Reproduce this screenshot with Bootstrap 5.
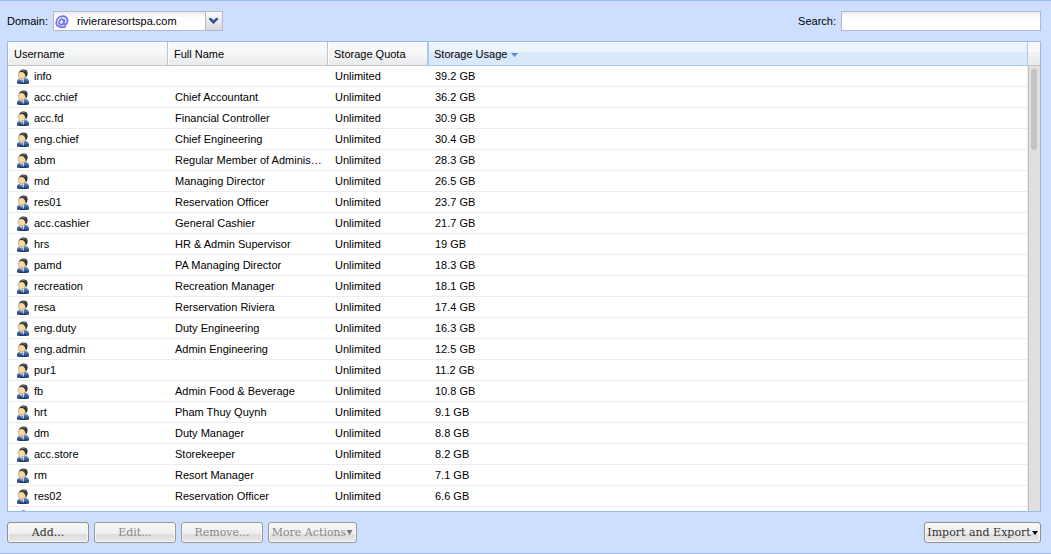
<!DOCTYPE html>
<html lang="en">
<head>
<meta charset="utf-8">
<meta name="viewport" content="width=device-width, initial-scale=1">
<title>Mailbox accounts</title>
<link href="https://cdn.jsdelivr.net/npm/bootstrap@5.3.0/dist/css/bootstrap.min.css" rel="stylesheet">
<style>
body{font:11px/20px "Liberation Sans",Arial,sans-serif;color:#000;background:#cddeff}
.shell{border-top:1px solid #99bbe8;border-bottom:1px solid #99bbe8;padding:10px 10px 10px 7px;gap:10px}
.pair{gap:5px}
.field{height:20px;border:1px solid #b5b8c8;border-radius:0;font-size:11px;line-height:16px;color:#000;background:linear-gradient(#e9ecee,#fff 6px)}
.field:focus{outline:1px solid #7eadd9}
.domain-pick{width:170px}
.domain-pick .field{appearance:none;padding:0 20px 0 23px}
.at-mark{left:2px;top:4px;pointer-events:none}
.trigger{right:0;top:0;width:18px;height:20px;border:1px solid #b5b8c8;background:linear-gradient(#fafafa,#d8dade);pointer-events:none}
.search-box{width:200px}
.panel{border:1px solid #99bbe8;background:#fff;min-height:0}
.accounts{table-layout:fixed;border-collapse:separate;border-spacing:0}
.accounts th{height:24px;padding:1px 6px 0;font-weight:400;line-height:21px;white-space:nowrap;border-right:1px solid #c5c5c5;border-bottom:1px solid #c5c5c5;background:linear-gradient(#f9f9f9,#f5f6f7 50%,#e9eaec);box-shadow:inset 1px 1px #fff}
.accounts th:nth-child(3){border-right-color:#a6c8f2}
.accounts th.sorted{border-color:#a6c8f2;background:linear-gradient(#fff 1px,#ebf3fd 1px,#ebf3fd 10px,#d9e8fb 10px);box-shadow:inset 1px 0 #a6c8f2}
.accounts td{height:21px;padding:0 5px 0 7px;line-height:20px;border-bottom:1px solid #ededed;white-space:nowrap;overflow:hidden}
.accounts td:first-child{padding-left:8px}
.accounts td:last-child{border-right:1px solid #ededed}
.person{width:14px;height:16px;margin-right:4px;vertical-align:-5px}
.sort-mark{margin-left:1px}
.c-name{width:160px}.c-quota{width:100px}
.side{width:12px}
.corner{height:24px;border-bottom:1px solid #c5c5c5;background:linear-gradient(#f9f9f9 10px,#f2f2f3 10px,#e9eaec)}
.track{border-left:1px solid #bdbdba;background:#e0e0de;padding:3px 3px 0 2px}
.thumb{height:81px;border-radius:3px;background:#c2c3c2}
.tools{gap:5px}
.tool{width:82px;height:21px;padding:1px 0 0;border:1px solid #8f8f8f;border-radius:3px;background:linear-gradient(#f8f8f8,#eee 11px,#dcdcdc 11px,#e9e9e9);box-shadow:inset 0 0 0 1px #f8f8f8;font:11px/18px "DejaVu Serif",serif;color:#333;white-space:nowrap}
.tool:disabled{color:#888;border-color:#999}
.tool-more{width:89px}.tool-export{width:117px}
.tool svg{vertical-align:1px}
</style>
</head>
<body>
<svg class="position-absolute" width="0" height="0" aria-hidden="true">
  <defs>
    <linearGradient id="suit" x2="0" y2="1"><stop stop-color="#7d9fd2"/><stop offset=".5" stop-color="#3f67ac"/><stop offset="1" stop-color="#162f6b"/></linearGradient>
    <symbol id="person" viewBox="0 0 14 16">
      <path d="M1 14.500C.5 11.500 2 9.500 5 9L9 8.500C12 9 13.500 11 13 14.500Q7 15.500 1 14.500Z" fill="url(#suit)"/>
      <path d="M3 9.500L8 9 7.500 14Z" fill="#fff"/>
      <path d="M5 10.500L6.500 10.500 7.500 14Z" fill="#444"/>
      <ellipse cx="6" cy="6" rx="3.800" ry="4" fill="#f6daa2" stroke="#a88654" stroke-width=".5"/>
      <path d="M3 3.500C4 1 6 .5 8 .5C11.500 .5 12.500 4 11 7L10 8.500 9 5.500 7.500 3.500 5.500 3Z" fill="#343638"/>
      <path d="M5.500 1.800C7 1.200 8.500 1.500 9.500 2.700" fill="none" stroke="#858a8c" stroke-width=".8"/>
    </symbol>
  </defs>
</svg>
<main class="shell vh-100 d-flex flex-column overflow-hidden">
  <header class="d-flex justify-content-between">
    <div class="pair d-flex">
      <label for="domain">Domain:</label>
      <div class="domain-pick position-relative">
        <select id="domain" class="field w-100 d-block"><option>rivieraresortspa.com</option></select>
        <svg class="at-mark position-absolute" width="14" height="14" viewBox="0 0 14 14" fill="none" stroke="#7578ea" stroke-width="1.900"><path d="M11 11.300C6 13.500 1.200 11.500 1.300 7.500C1.500 3 5 1.200 8 1.300C11.500 1.500 13 4 12.500 6.500C12 9 10 10 9 9.500C8.300 9 9 7.500 9.700 4.200"/><ellipse cx="6.500" cy="7" rx="2.200" ry="2.700" transform="rotate(20 6.500 7)"/></svg>
        <span class="trigger position-absolute d-flex align-items-center justify-content-center"><svg width="9" height="6" viewBox="0 0 9 6"><path d="M0 0H2L4.500 2.200 7 0H9V1.500L4.500 6 0 1.500Z" fill="#2b5390"/></svg></span>
      </div>
    </div>
    <div class="pair d-flex">
      <label for="search">Search:</label>
      <input id="search" type="text" class="field search-box">
    </div>
  </header>
  <section class="panel d-flex flex-grow-1 overflow-hidden">
    <div class="flex-grow-1 overflow-hidden">
      <table class="accounts w-100">
        <colgroup><col class="c-name"><col class="c-name"><col class="c-quota"><col></colgroup>
        <thead><tr><th>Username</th><th>Full Name</th><th>Storage Quota</th><th class="sorted">Storage Usage <svg class="sort-mark" width="7" height="4" viewBox="0 0 7 4"><path d="M0 0H7L3.500 4Z" fill="#5b8bd0"/></svg></th></tr></thead>
        <tbody id="rows"></tbody>
      </table>
    </div>
    <div class="side d-flex flex-column flex-shrink-0">
      <div class="corner"></div>
      <div class="track flex-grow-1"><div class="thumb"></div></div>
    </div>
  </section>
  <footer class="d-flex justify-content-between">
    <div class="tools d-flex">
      <button type="button" class="tool">Add...</button>
      <button type="button" class="tool" disabled>Edit...</button>
      <button type="button" class="tool" disabled>Remove...</button>
      <button type="button" class="tool tool-more" disabled>More Actions<svg width="7" height="5" viewBox="0 0 7 5"><path d="M.5 0H6.500L3.500 5Z" fill="#777"/></svg></button>
    </div>
    <button type="button" class="tool tool-export">Import and Export<svg width="7" height="4" viewBox="0 0 7 4"><path d="M1 0H7L4 4Z" fill="#000"/></svg></button>
  </footer>
</main>
<script>
const accounts = [
  ["info","","39.2 GB"],["acc.chief","Chief Accountant","36.2 GB"],["acc.fd","Financial Controller","30.9 GB"],
  ["eng.chief","Chief Engineering","30.4 GB"],["abm","Regular Member of Adminis…","28.3 GB"],["md","Managing Director","26.5 GB"],
  ["res01","Reservation Officer","23.7 GB"],["acc.cashier","General Cashier","21.7 GB"],["hrs","HR & Admin Supervisor","19 GB"],
  ["pamd","PA Managing Director","18.3 GB"],["recreation","Recreation Manager","18.1 GB"],["resa","Rerservation Riviera","17.4 GB"],
  ["eng.duty","Duty Engineering","16.3 GB"],["eng.admin","Admin Engineering","12.5 GB"],["pur1","","11.2 GB"],
  ["fb","Admin Food & Beverage","10.8 GB"],["hrt","Pham Thuy Quynh","9.1 GB"],["dm","Duty Manager","8.8 GB"],
  ["acc.store","Storekeeper","8.2 GB"],["rm","Resort Manager","7.1 GB"],["res02","Reservation Officer","6.6 GB"],["","",""]
];
const body = document.getElementById("rows");
for (const [user, name, usage] of accounts) {
  const row = body.insertRow();
  row.insertCell().innerHTML = '<svg class="person"><use href="#person"/></svg>';
  row.cells[0].append(user);
  for (const text of [name, usage && "Unlimited", usage]) row.insertCell().textContent = text;
}
</script>
<script src="https://cdn.jsdelivr.net/npm/bootstrap@5.3.0/dist/js/bootstrap.bundle.min.js"></script>
</body>
</html>
